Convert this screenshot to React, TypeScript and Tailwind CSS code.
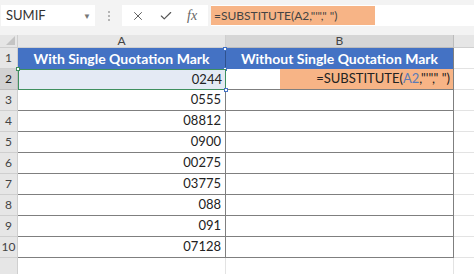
import { X, Check } from 'lucide-react';

const values = ['0244', '0555', '08812', '0900', '00275', '03775', '088', '091', '07128'];

const font = { fontFamily: 'Lato, "Noto Sans", sans-serif' };

function RowHeader({ n, active }: { n?: number; active?: boolean }) {
  return (
    <div
      className={`w-[18px] shrink-0 flex items-center justify-center text-[12px] border-r border-b ${
        active ? 'bg-[#d2d2d2] text-[#222] border-[#bdbdbd]' : 'bg-[#e6e6e6] text-[#444] border-[#cfcfcf]'
      }`}
    >
      {n}
    </div>
  );
}

export default function App() {
  return (
    <div className="w-[474px] h-[274px] overflow-hidden bg-white flex flex-col" style={font}>
      {/* Formula bar */}
      <div className="h-[35px] shrink-0 bg-[#f3f3f3] flex items-start pt-[5px]">
        <div className="ml-[1px] w-[94px] h-[21px] bg-white flex items-center justify-between pl-[5px] pr-[4px] text-[13px] text-[#333]">
          <span>SUMIF</span>
          <span className="text-[8px] text-[#777]">▼</span>
        </div>
        <div className="w-[27px] h-[21px] flex items-center justify-center">
          <div className="flex flex-col gap-[2px]">
            <span className="block w-[2px] h-[2px] bg-[#b5b5b5]" />
            <span className="block w-[2px] h-[2px] bg-[#b5b5b5]" />
            <span className="block w-[2px] h-[2px] bg-[#b5b5b5]" />
          </div>
        </div>
        <div className="w-[86px] h-[21px] bg-white flex items-center pl-[9px] gap-[14px] text-[#555]">
          <X size={14} strokeWidth={1.6} />
          <Check size={14} strokeWidth={2} />
          <span className="italic text-[14px] text-[#666]" style={{ fontFamily: '"Liberation Serif", serif' }}>
            fx
          </span>
        </div>
        <div className="ml-[3px] flex-1 h-[21px] bg-white flex items-start">
          <div className="w-[164px] h-[19px] mt-[1px] bg-[#f7b486] flex items-center pl-[3px] text-[12px] text-[#444] whitespace-nowrap">
            =SUBSTITUTE(A2,"'"," ")
          </div>
        </div>
      </div>

      {/* Column headers */}
      <div className="h-[13px] shrink-0 flex text-[12px] leading-none text-[#444]">
        <div className="w-[18px] shrink-0 bg-[#e6e6e6] border-r border-b border-[#cfcfcf] relative">
          <div className="absolute right-[2px] bottom-[2px] w-0 h-0 border-l-[9px] border-l-transparent border-b-[9px] border-b-[#c4c4c4]" />
        </div>
        <div className="w-[208px] shrink-0 bg-[#e6e6e6] border-r border-b border-[#cfcfcf] flex items-center justify-center">
          A
        </div>
        <div className="w-[228px] shrink-0 bg-[#d6d6d6] border-r border-b border-[#bcbcbc] flex items-center justify-center">
          B
        </div>
        <div className="flex-1 bg-[#e6e6e6] border-b border-[#cfcfcf]" />
      </div>

      {/* Row 1 - table header */}
      <div className="h-[21px] shrink-0 flex">
        <RowHeader n={1} />
        <div className="w-[208px] shrink-0 bg-[#4472c4] border-r border-[#2f528f] flex items-center justify-center text-white font-bold text-[14px] relative">
          With Single Quotation Mark
          <span className="absolute -right-[2px] -top-[1px] w-[4px] h-[4px] bg-white border border-[#4472c4]" />
          <span className="absolute -right-[2px] -bottom-[2px] w-[4px] h-[4px] bg-white border border-[#4472c4]" />
        </div>
        <div className="w-[228px] shrink-0 bg-[#4472c4] border-r border-[#7f7f7f] flex items-center justify-center text-white font-bold text-[14px]">
          Without Single Quotation Mark
        </div>
        <div className="flex-1 border-b border-[#e3e3e3]" />
      </div>

      {/* Data rows */}
      {values.map((v, i) => (
        <div key={v + i} className="h-[21px] shrink-0 flex text-[13px] text-[#222]">
          <RowHeader n={i + 2} active={i === 0} />
          {i === 0 ? (
            <div className="w-[208px] shrink-0 bg-[#e4eaf4] border border-[#3f8f5e] flex items-center justify-end pr-[3px] relative">
              {v}
              <span className="absolute -left-[3px] -top-[3px] w-[4px] h-[4px] bg-white border border-[#3f8f5e]" />
              <span className="absolute -right-[3px] -bottom-[3px] w-[4px] h-[4px] bg-white border border-[#4472c4]" />
            </div>
          ) : (
            <div className="w-[208px] shrink-0 border-r border-b border-[#7f7f7f] flex items-center justify-end pr-[4px]">
              {v}
            </div>
          )}
          {i === 0 ? (
            <div className="w-[228px] shrink-0 border-r border-b border-[#7f7f7f] flex">
              <div className="w-[54px] shrink-0" />
              <div className="flex-1 bg-[#f7b486] flex items-center justify-end pr-[3px] whitespace-nowrap">
                =SUBSTITUTE(<span className="text-[#5b7bb5]">A2</span>,"'"," ")
              </div>
            </div>
          ) : (
            <div className="w-[228px] shrink-0 border-r border-b border-[#7f7f7f]" />
          )}
          <div className="flex-1 border-b border-[#e3e3e3]" />
        </div>
      ))}

      {/* Empty row below */}
      <div className="flex-1 flex">
        <div className="w-[18px] shrink-0 bg-[#e6e6e6] border-r border-[#cfcfcf]" />
        <div className="w-[208px] shrink-0 border-r border-[#e3e3e3]" />
        <div className="w-[228px] shrink-0 border-r border-[#e3e3e3]" />
        <div className="flex-1" />
      </div>
    </div>
  );
}
